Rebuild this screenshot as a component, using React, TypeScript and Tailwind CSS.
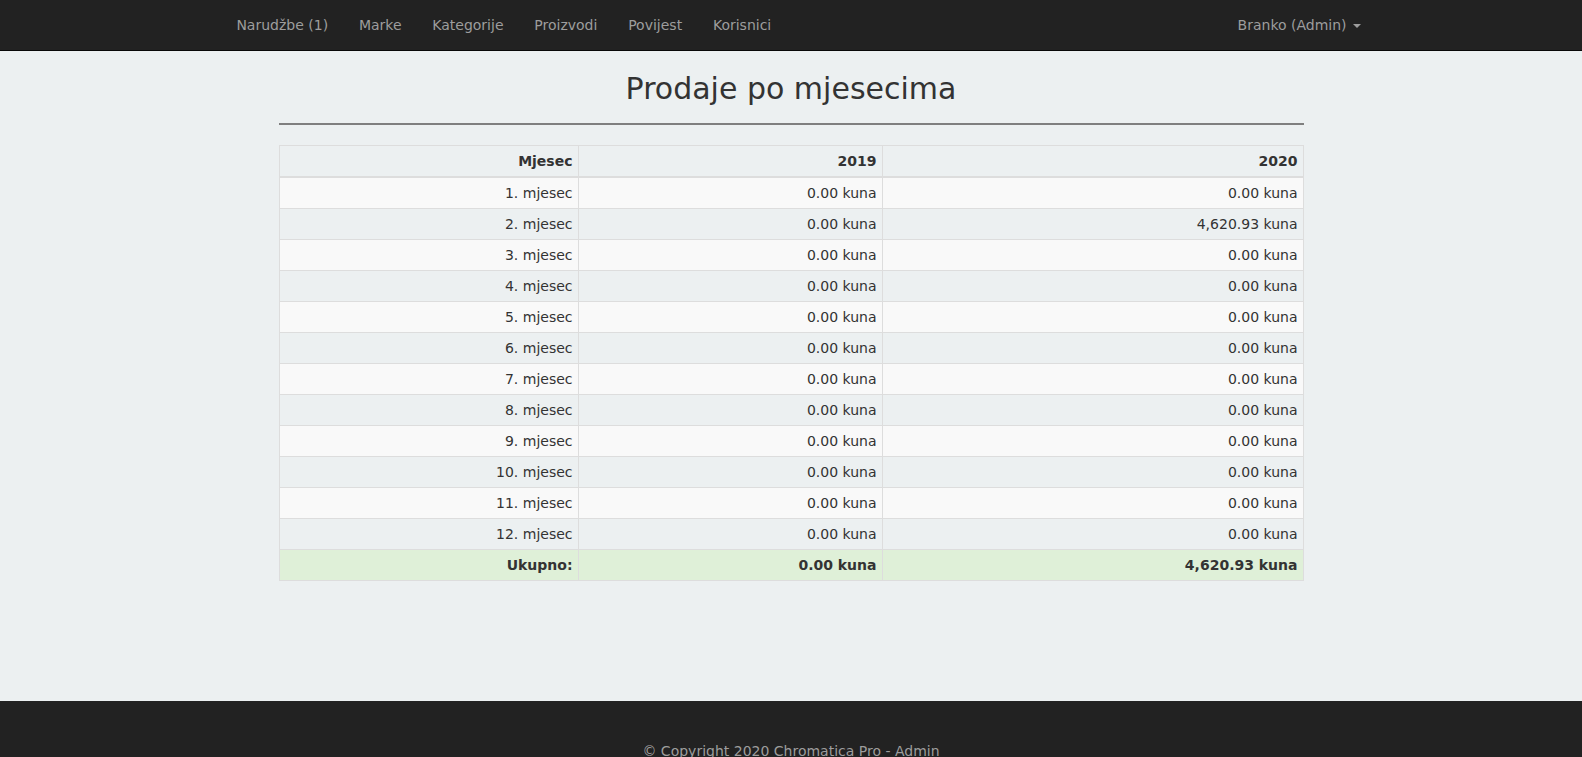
import React from "react";

const months = Array.from({ length: 12 }, (_, i) => ({
  label: `${i + 1}. mjesec`,
  y2019: "0.00 kuna",
  y2020: i === 1 ? "4,620.93 kuna" : "0.00 kuna",
}));

const navItems = ["Narudžbe (1)", "Marke", "Kategorije", "Proizvodi", "Povijest", "Korisnici"];

export default function App() {
  return (
    <div className="font-['DejaVu_Sans',Verdana,sans-serif] text-[14px] leading-5 text-[#333] bg-[#ecf0f1] min-h-screen">
      <nav className="h-[51px] bg-[#222] border-b border-[#080808]">
        <div className="w-[1170px] mx-auto px-[15px] flex justify-between">
          <ul className="flex">
            {navItems.map((n) => (
              <li key={n}>
                <a className="block px-[15.4px] pt-[15px] pb-[15px] leading-5 text-[#9d9d9d]">{n}</a>
              </li>
            ))}
          </ul>
          <ul className="flex -mr-[15px]">
            <li>
              <a className="block px-[15px] pt-[15px] pb-[15px] leading-5 text-[#9d9d9d]">
                Branko (Admin){" "}
                <span className="inline-block w-0 h-0 ml-[2px] align-middle border-t-[4px] border-x-[4px] border-x-transparent border-t-[#9d9d9d]"></span>
              </a>
            </li>
          </ul>
        </div>
      </nav>

      <main className="min-h-[650px] pt-[21px]">
        <div className="w-[1025px] mx-auto">
          <h1 className="text-[30px] leading-[33px] text-center font-normal text-[#333]">Prodaje po mjesecima</h1>
          <hr className="mt-[18px] border-0 border-t-2 border-[#7f7f7f]" />
          <table className="mt-[20px] w-[1025px] border-collapse border border-[#ddd]">
            <colgroup>
              <col className="w-[299px]" />
              <col className="w-[304px]" />
              <col />
            </colgroup>
            <thead>
              <tr>
                <th className="border border-[#ddd] border-b-2 px-[5px] py-[5px] text-right font-bold">Mjesec</th>
                <th className="border border-[#ddd] border-b-2 px-[5px] py-[5px] text-right font-bold">2019</th>
                <th className="border border-[#ddd] border-b-2 px-[5px] py-[5px] text-right font-bold">2020</th>
              </tr>
            </thead>
            <tbody>
              {months.map((m, i) => (
                <tr key={m.label} className={i % 2 === 0 ? "bg-[#f9f9f9]" : "bg-[#ecf0f1]"}>
                  <td className="border border-[#ddd] px-[5px] py-[5px] text-right">{m.label}</td>
                  <td className="border border-[#ddd] px-[5px] py-[5px] text-right">{m.y2019}</td>
                  <td className="border border-[#ddd] px-[5px] py-[5px] text-right">{m.y2020}</td>
                </tr>
              ))}
              <tr className="bg-[#dff0d8]">
                <td className="border border-[#ddd] px-[5px] py-[5px] text-right font-bold">Ukupno:</td>
                <td className="border border-[#ddd] px-[5px] py-[5px] text-right font-bold">0.00 kuna</td>
                <td className="border border-[#ddd] px-[5px] py-[5px] text-right font-bold">4,620.93 kuna</td>
              </tr>
            </tbody>
          </table>
        </div>
      </main>

      <footer className="bg-[#222] pt-[40px] pb-[40px] text-center text-[#9d9d9d]">
        <p>© Copyright 2020 Chromatica Pro - Admin</p>
      </footer>
    </div>
  );
}
